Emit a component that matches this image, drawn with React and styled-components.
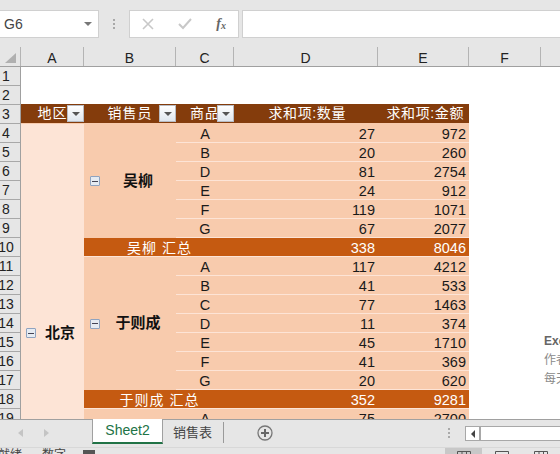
import React from 'react';
import styled, { createGlobalStyle } from 'styled-components';

const Global = createGlobalStyle`
  html, body { margin: 0; padding: 0; background: #e6e6e6; }
  * { box-sizing: border-box; }
`;
const FONT = `"Liberation Sans", "Noto Sans CJK SC", sans-serif`;

const Window = styled.div`
  width: 560px; height: 454px; overflow: hidden; display: flex; flex-direction: column;
  background: #e6e6e6; font-family: ${FONT}; font-size: 14px; color: #1a1a1a;
`;
const FormulaBar = styled.div`
  height: 47px; flex: none; padding-top: 10px; display: flex; align-items: flex-start;
`;
const NameBox = styled.div`
  width: 99px; height: 28px; background: #fff; border: 1px solid #d0d0d0; border-left: 0;
  display: flex; align-items: center; justify-content: space-between; padding: 0 4px 0 4px;
  color: #444; font-size: 14px;
`;
const Caret = styled.span`
  width: 0; height: 0; border-left: 4px solid transparent; border-right: 4px solid transparent;
  border-top: 4px solid #777; margin-right: 2px;
`;
const Grip = styled.div`
  width: 30px; height: 28px; display: flex; flex-direction: column; align-items: center; justify-content: center; gap: 2px;
  & > i { width: 2px; height: 2px; background: #a8a8a8; display: block; }
`;
const FormulaButtons = styled.div`
  width: 110px; height: 28px; background: #fff; border: 1px solid #d0d0d0; margin-left: 0;
  display: flex; align-items: center; justify-content: space-between; padding: 0 12px 0 12px;
`;
const Fx = styled.span`
  font-family: "Liberation Serif", serif; font-style: italic; font-weight: bold; font-size: 14px; color: #666;
  & > sub { font-size: 10px; vertical-align: -1px; line-height: 0; }
`;
const FormulaInput = styled.div`
  flex: 1; height: 28px; margin-left: 3px; background: #fff; border: 1px solid #d0d0d0; border-right: 0;
`;
const ColumnHeaders = styled.div`
  height: 20px; flex: none; display: grid; grid-template-columns: 21px 63px 92px 58px 144px 91px 72px 1fr;
  border-bottom: 1px solid #a0a0a0;
`;
const ColHead = styled.div`
  display: flex; align-items: center; justify-content: center; padding-top: 2px;
  border-right: 1px solid #b4b4b4; color: #222; font-size: 14px; line-height: 16px;
  &:last-child { border-right: 0; }
`;
const Corner = styled.div`
  border-right: 1px solid #b4b4b4; display: flex; align-items: flex-end; justify-content: flex-end; padding: 0 4px 3px 0;
`;
const SheetBody = styled.div`
  height: 352px; flex: none; display: flex; overflow: hidden;
`;
const RowHeaders = styled.div`
  width: 21px; flex: none; border-right: 1px solid #a0a0a0; background: #e6e6e6;
`;
const RowHead = styled.div`
  height: 19px; border-bottom: 1px solid #a8a8a8; padding-right: 8px; display: flex; align-items: center; justify-content: center;
  font-size: 14px; color: #222; line-height: 16px; white-space: nowrap;
`;
const Canvas = styled.div`
  position: relative; flex: 1; background: #fff; overflow: hidden; padding-top: 37px;
`;
const Pivot = styled.div`
  display: grid; width: 448px; grid-template-columns: 63px 92px 58px 144px 91px; grid-template-rows: 20px; grid-auto-rows: 19px;
  background: #f8cbad; color: #111;
`;
const HeaderCell = styled.div`
  background: #843c0c; color: #fff; display: flex; align-items: center; height: 19px;
  justify-content: ${p => (p.$pad ? 'flex-end' : 'center')};
  padding-right: ${p => p.$pad || 0}px;
  font-size: 14px; line-height: 19px; white-space: nowrap; letter-spacing: ${p => (p.$pad ? '0.6px' : '1px')};
  position: relative;
`;
const FilterButton = styled.span`
  width: 17px; height: 17px; flex: none; background: linear-gradient(#fff, #dfe6ee); border: 1px solid #b8bcc4;
  display: flex; align-items: center; justify-content: center; position: absolute; right: 0; top: 1px;
  &::after { content: ''; border-left: 4px solid transparent; border-right: 4px solid transparent; border-top: 4px solid #555; }
`;
const Region = styled.div`
  grid-row: span ${p => p.$span}; background: #fde4d6; display: flex; align-items: center; padding-left: 5px;
  font-weight: bold; font-size: 15px;
`;
const Group = styled.div`
  grid-row: span ${p => p.$span}; display: flex; align-items: center; padding-left: 6px;
  font-weight: bold; font-size: 15px;
`;
const GroupLabel = styled.span`
  flex: 1; text-align: center; white-space: nowrap; padding-bottom: 4px;
`;
const Expander = styled.span`
  width: 10px; height: 10px; flex: none; border: 1px solid #8fa3c0; border-radius: 1px; background: #e6ebf2;
  display: flex; align-items: center; justify-content: center;
  &::after { content: ''; width: 6px; height: 1px; background: #445; }
`;
const Item = styled.div`
  height: 19px; border-bottom: 1px solid #fde4d6; line-height: 20px; font-size: 14.5px; color: #1a1a1a; white-space: nowrap;
  text-align: ${p => (p.$num ? 'right' : 'center')};
  padding-right: ${p => (p.$num ? '3px' : '0')};
`;
const SubLabel = styled.div`
  grid-column: span 2; height: 19px; background: #c55a11; color: #fff; border-bottom: 1px solid #fde4d6; text-align: center; line-height: 20px; white-space: nowrap; letter-spacing: 1px; padding-left: 1px;
`;
const SubNum = styled.div`
  height: 19px; background: #c55a11; color: #fff; border-bottom: 1px solid #fde4d6; text-align: right; padding-right: 3px; line-height: 20px; font-size: 14.5px;
`;
const Note = styled.div`
  position: absolute; left: 523px; top: ${p => p.$top}px; white-space: nowrap; font-size: 12px; line-height: 16px;
  color: ${p => (p.$bold ? '#666' : '#8a8a8a')}; font-weight: ${p => (p.$bold ? 'bold' : 'normal')};
`;
const TabBar = styled.div`
  height: 28px; flex: none; border-top: 1px solid #a0a0a0; display: flex; align-items: flex-start; position: relative;
`;
const TabNav = styled.div`
  width: 92px; height: 26px; display: flex; align-items: center; gap: 21px; padding-left: 18px;
`;
const NavArrow = styled.span`
  width: 0; height: 0; border-top: 4px solid transparent; border-bottom: 4px solid transparent;
  ${p => (p.$left ? 'border-right: 5px solid #c4c4c4;' : 'border-left: 5px solid #c4c4c4;')}
`;
const ActiveTab = styled.div`
  width: 71px; height: 25px; margin-top: -1px; background: #fff; color: #217346; border: 1px solid #a0a0a0; border-top: 0; border-bottom: 2px solid #217346;
  text-align: center; line-height: 23px; font-size: 14px;
`;
const Tab = styled.div`
  width: 61px; height: 21px; margin-top: 2px; border-right: 1px solid #9a9a9a; text-align: left; line-height: 21px; color: #444; font-size: 13px; padding-left: 10px;
`;
const AddSheet = styled.div`
  width: 16px; height: 16px; margin: 5px 0 0 33px; color: #777; flex: none;
`;
const TabSpacer = styled.div`flex: 1;`;
const TabDots = styled.div`
  width: 14px; height: 26px; margin-right: 9px; display: flex; flex-direction: column; align-items: center; justify-content: center; gap: 2px;
  & > i { width: 2px; height: 2px; background: #aaa; display: block; }
`;
const HScroll = styled.div`
  width: 95px; height: 15px; margin-top: 6px; background: #fff; border: 1px solid #a8a8a8; border-right: 0; display: flex;
`;
const ScrollLeft = styled.div`
  width: 15px; border-right: 2px solid #a8a8a8; display: flex; align-items: center; justify-content: center;
  &::after { content: ''; border-top: 4px solid transparent; border-bottom: 4px solid transparent; border-right: 4px solid #444; }
`;
const StatusBar = styled.div`
  height: 7px; flex: none; overflow: hidden; display: flex; align-items: flex-start; font-size: 12px; color: #444; border-top: 1px solid #d8d8d8;
`;
const StatusText = styled.span`
  line-height: 14px; margin-top: 0; margin-left: ${p => p.$ml}px; white-space: nowrap; width: ${p => p.$w}px; flex: none;
`;
const MacroIcon = styled.span`
  width: ${p => p.$w}px; flex: none; padding-top: 2px; display: block;
  & > i { width: 12px; height: 8px; background: #555; display: block; }
`;
const ViewBtn = styled.span`
  width: ${p => p.$w}px; height: 7px; flex: none; background: ${p => (p.$on ? '#c8c8c8' : 'transparent')};
  display: flex; justify-content: center; padding-top: 3px;
`;

const groups = [
  { name: '吴柳', rows: [['A',27,972],['B',20,260],['D',81,2754],['E',24,912],['F',119,1071],['G',67,2077]], total: [338,8046] },
  { name: '于则成', rows: [['A',117,4212],['B',41,533],['C',77,1463],['D',11,374],['E',45,1710],['F',41,369],['G',20,620]], total: [352,9281] },
];
const rowNumbers = Array.from({ length: 19 }, (_, i) => i + 1);

const X = () => (
  <svg width="12" height="12" viewBox="0 0 12 12"><path d="M1 1l10 10M11 1L1 11" stroke="#c8c8c8" strokeWidth="1.6" fill="none" /></svg>
);
const Check = () => (
  <svg width="14" height="12" viewBox="0 0 14 12"><path d="M1 6l4 4 8-9" stroke="#c8c8c8" strokeWidth="2" fill="none" /></svg>
);
const ViewIcon = ({ d }) => (
  <svg width="14" height="10" viewBox="0 0 14 10"><path d={d} stroke="#555" strokeWidth="1" fill="none" /></svg>
);

export default function App() {
  return (
    <Window>
      <Global />
      <FormulaBar>
        <NameBox>G6<Caret /></NameBox>
        <Grip><i /><i /><i /></Grip>
        <FormulaButtons><X /><Check /><Fx>f<sub>x</sub></Fx></FormulaButtons>
        <FormulaInput />
      </FormulaBar>
      <ColumnHeaders>
        <Corner><svg width="11" height="10" viewBox="0 0 11 10"><path d="M11 0v10H0z" fill="#b0b0b0" /></svg></Corner>
        {['A','B','C','D','E','F',''].map((c, i) => <ColHead key={i}>{c}</ColHead>)}
      </ColumnHeaders>
      <SheetBody>
        <RowHeaders>
          {rowNumbers.map(n => <RowHead key={n}>{n}</RowHead>)}
        </RowHeaders>
        <Canvas>
          <Pivot>
            <HeaderCell>地区<FilterButton /></HeaderCell>
            <HeaderCell>销售员<FilterButton /></HeaderCell>
            <HeaderCell>商品<FilterButton /></HeaderCell>
            <HeaderCell $pad={32}>求和项:数量</HeaderCell>
            <HeaderCell $pad={5}>求和项:金额</HeaderCell>
            <Region $span={22}><Expander /><GroupLabel>北京</GroupLabel></Region>
            {groups.map(g => (
              <React.Fragment key={g.name}>
                <Group $span={g.rows.length}><Expander /><GroupLabel>{g.name}</GroupLabel></Group>
                {g.rows.map((r, i) => (
                  <React.Fragment key={i}>
                    <Item>{r[0]}</Item><Item $num>{r[1]}</Item><Item $num>{r[2]}</Item>
                  </React.Fragment>
                ))}
                <SubLabel>{g.name} 汇总</SubLabel>
                <SubNum>{g.total[0]}</SubNum><SubNum>{g.total[1]}</SubNum>
              </React.Fragment>
            ))}
            <Group $span={1} />
            <Item>A</Item><Item $num>75</Item><Item $num>2700</Item>
          </Pivot>
          <Note $bold $top={266}>Excel精选技巧</Note>
          <Note $top={285}>作者：老师</Note>
          <Note $top={304}>每天分享技巧</Note>
        </Canvas>
      </SheetBody>
      <TabBar>
        <TabNav><NavArrow $left /><NavArrow /></TabNav>
        <ActiveTab>Sheet2</ActiveTab>
        <Tab>销售表</Tab>
        <AddSheet>
          <svg width="16" height="16" viewBox="0 0 16 16"><circle cx="8" cy="8" r="7" fill="none" stroke="#777" strokeWidth="1.3" /><path d="M8 4v8M4 8h8" stroke="#666" strokeWidth="2" /></svg>
        </AddSheet>
        <TabSpacer />
        <TabDots><i /><i /><i /></TabDots>
        <HScroll><ScrollLeft /></HScroll>
      </TabBar>
      <StatusBar>
        <StatusText $ml={-2} $w={44}>就绪</StatusText>
        <StatusText $ml={0} $w={41}>数字</StatusText>
        <MacroIcon $w={362}><i /></MacroIcon>
        <ViewBtn $w={37} $on><ViewIcon d="M.5.5h13v9H.5zM.5 3.5h13M5 .5v9M9.5 .5v9" /></ViewBtn>
        <ViewBtn $w={40}><ViewIcon d="M.5.5h13v9H.5zM3.5 3.5h7v6" /></ViewBtn>
        <ViewBtn $w={38}><ViewIcon d="M.5.5h13v9H.5zM5 .5v9M9.5 .5v9" /></ViewBtn>
      </StatusBar>
    </Window>
  );
}
